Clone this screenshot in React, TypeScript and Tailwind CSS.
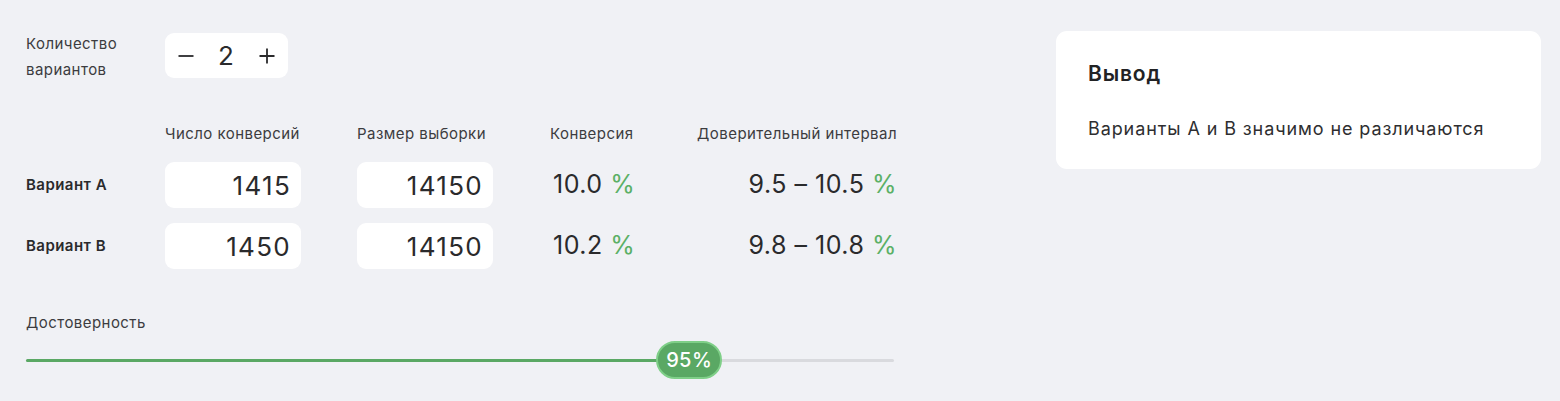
import { useState } from "react";

const rows = [
  { name: "Вариант A", conv: "1415", size: "14150", rate: "10.0", lo: "9.5", hi: "10.5" },
  { name: "Вариант B", conv: "1450", size: "14150", rate: "10.2", lo: "9.8", hi: "10.8" },
];

function Pct() {
  return <span className="text-[#5bb066]">%</span>;
}

function Minus() {
  return (
    <svg width="16" height="16" viewBox="0 0 16 16" fill="none" stroke="currentColor" strokeWidth="1.8">
      <path d="M0.5 8h15" />
    </svg>
  );
}

function Plus() {
  return (
    <svg width="16" height="16" viewBox="0 0 16 16" fill="none" stroke="currentColor" strokeWidth="1.8">
      <path d="M0.5 8h15M8 0.5v15" />
    </svg>
  );
}

export default function App() {
  const [count, setCount] = useState(2);
  const level = 95;

  return (
    <div className="flex min-h-[401px] bg-[#f0f1f5] pl-[26px] pr-[19px] pt-[31px] font-['Inter',sans-serif] text-[#2a2a2c]">
      <div className="w-[871px] shrink-0">
        <div className="flex items-start">
          <div className="w-[139px] text-[15px] leading-[26px] tracking-[0.03em] text-[#3c3c40]">
            Количество
            <br />
            вариантов
          </div>
          <div className="mt-[2px] flex h-[45px] w-[123px] items-center justify-between rounded-[9px] bg-white px-[13px] text-[26px] tracking-[0.04em]">
            <button onClick={() => setCount(Math.max(2, count - 1))} className="flex items-center">
              <Minus />
            </button>
            <span className="leading-none">{count}</span>
            <button onClick={() => setCount(count + 1)} className="flex items-center">
              <Plus />
            </button>
          </div>
        </div>

        <div className="mt-[42px] flex text-[15px] leading-[18px] tracking-[0.03em] text-[#3c3c40]">
          <div className="w-[139px]" />
          <div className="w-[192px]">Число конверсий</div>
          <div className="w-[193px]">Размер выборки</div>
          <div className="w-[145px]">Конверсия</div>
          <div className="w-[202px] whitespace-nowrap text-right">Доверительный интервал</div>
        </div>

        <div className="mt-[19px] flex flex-col gap-[15px]">
          {rows.map((r) => (
            <div key={r.name} className="flex items-center">
              <div className="w-[139px] text-[15px] font-semibold tracking-[0.03em]">{r.name}</div>
              <div className="w-[192px]">
                <div className="flex h-[46px] w-[136px] items-center justify-end rounded-[9px] bg-white pr-[10px] text-[26px] tracking-[0.05em]">
                  {r.conv}
                </div>
              </div>
              <div className="w-[193px]">
                <div className="flex h-[46px] w-[136px] items-center justify-end rounded-[9px] bg-white pr-[10px] text-[26px] tracking-[0.05em]">
                  {r.size}
                </div>
              </div>
              <div className="w-[145px] pl-[3px] text-[25px] tracking-[0.02em]">
                {r.rate} <Pct />
              </div>
              <div className="w-[202px] whitespace-nowrap text-right text-[25px] tracking-[0.02em]">
                {r.lo} – {r.hi} <Pct />
              </div>
            </div>
          ))}
        </div>

        <div className="mt-[44px] text-[15px] leading-[20px] tracking-[0.03em] text-[#3c3c40]">Достоверность</div>
        <div className="relative mt-[8px] h-[40px] w-[868px]">
          <div className="absolute left-0 right-0 top-[18px] h-[3px] rounded-full bg-[#d9dade]" />
          <div className="absolute left-0 top-[18px] h-[3px] rounded-full bg-[#5aa864]" style={{ width: "76.4%" }} />
          <div
            className="absolute top-0 flex h-[38px] w-[66px] -translate-x-1/2 items-center justify-center rounded-full border-2 border-[#7fcf88] bg-[#5aa864] text-[20px] font-medium tracking-[0.02em] text-white"
            style={{ left: "76.4%" }}
          >
            {level}%
          </div>
        </div>
      </div>

      <div className="ml-auto h-[138px] w-[485px] rounded-[11px] bg-white px-[32px] pt-[28px]">
        <div className="text-[21px] font-semibold leading-[30px] tracking-[0.04em] text-[#222224]">Вывод</div>
        <div className="mt-[28px] whitespace-nowrap text-[18px] leading-[24px] tracking-[0.05em] text-[#2e2e30]">
          Варианты A и B значимо не различаются
        </div>
      </div>
    </div>
  );
}
